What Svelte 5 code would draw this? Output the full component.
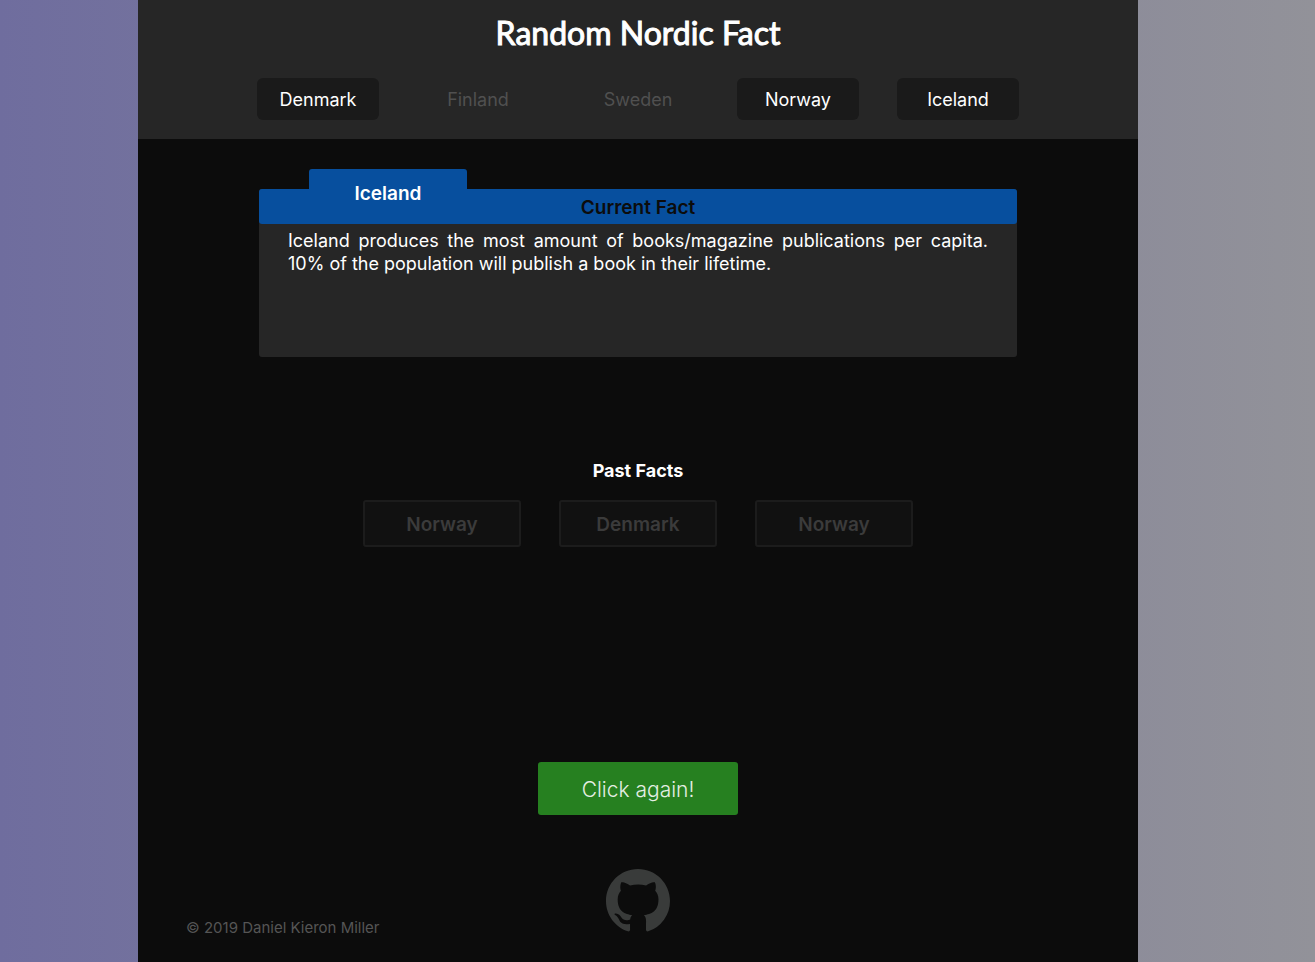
<script>
  let countries = $state([
    { name: 'Denmark', on: true },
    { name: 'Finland', on: false },
    { name: 'Sweden', on: false },
    { name: 'Norway', on: true },
    { name: 'Iceland', on: true }
  ]);
  const pastFacts = ['Norway', 'Denmark', 'Norway'];
</script>

<div class="backdrop">
  <div class="page">
    <header>
      <h1>Random Nordic Fact</h1>
      <div class="countries">
        {#each countries as country}
          <button
            type="button"
            class="country"
            class:on={country.on}
            aria-pressed={country.on}
            onclick={() => (country.on = !country.on)}>{country.name}</button>
        {/each}
      </div>
    </header>

    <main>
      <section class="fact">
        <div class="tab">Iceland</div>
        <h2 class="fact-title">Current Fact</h2>
        <p>
          Iceland produces the most amount of books/magazine publications per capita. 10% of the
          population will publish a book in their lifetime.
        </p>
      </section>

      <section class="past">
        <h2>Past Facts</h2>
        <div class="past-list">
          {#each pastFacts as fact}
            <button type="button" class="past-fact">{fact}</button>
          {/each}
        </div>
      </section>

      <button type="button" class="again">Click again!</button>
    </main>

    <footer>
      <small>© 2019 Daniel Kieron Miller</small>
      <a href="#github" aria-label="GitHub">
        <svg viewBox="0 0 16 16" width="64" height="64" aria-hidden="true">
          <path
            fill="currentColor"
            d="M8 0C3.58 0 0 3.58 0 8c0 3.54 2.29 6.53 5.47 7.59.4.07.55-.17.55-.38 0-.19-.01-.82-.01-1.49-2.01.37-2.53-.49-2.69-.94-.09-.23-.48-.94-.82-1.13-.28-.15-.68-.52-.01-.53.63-.01 1.08.58 1.23.82.72 1.21 1.87.87 2.33.66.07-.52.28-.87.51-1.07-1.78-.2-3.64-.89-3.64-3.95 0-.87.31-1.59.82-2.15-.08-.2-.36-1.02.08-2.12 0 0 .67-.21 2.2.82.64-.18 1.32-.27 2-.27s1.36.09 2 .27c1.53-1.04 2.2-.82 2.2-.82.44 1.1.16 1.92.08 2.12.51.56.82 1.27.82 2.15 0 3.07-1.87 3.75-3.65 3.95.29.25.54.73.54 1.48 0 1.07-.01 1.93-.01 2.2 0 .21.15.46.55.38A8.01 8.01 0 0 0 16 8c0-4.42-3.58-8-8-8z"
          />
        </svg>
      </a>
    </footer>
  </div>
</div>

<style>
  :global(body) {
    margin: 0;
  }

  .backdrop {
    box-sizing: border-box;
    min-height: 100vh;
    display: flex;
    justify-content: center;
    padding-right: 39px;
    background: linear-gradient(to right, #6f6d9e, #929299);
    font-family: Inter, 'Liberation Sans', sans-serif;
    font-size: 18px;
    color: #fff;
  }

  .page {
    flex: 0 1 1000px;
    min-width: 0;
    display: flex;
    flex-direction: column;
    background: #0c0c0c;
  }

  button {
    font: inherit;
    cursor: pointer;
  }

  h1,
  h2,
  p {
    margin: 0;
  }

  header {
    padding: 12px 16px 19px;
    background: #262626;
    text-align: center;
  }

  h1 {
    font: 400 32px/42px Lato, sans-serif;
    -webkit-text-stroke: 1px currentColor;
  }

  .countries {
    display: flex;
    flex-wrap: wrap;
    justify-content: center;
    gap: 38px;
    margin-top: 24px;
  }

  .country {
    width: 122px;
    height: 42px;
    padding: 0;
    border: 0;
    border-radius: 6px;
    background: transparent;
    color: #505050;
  }

  .country.on {
    background: #1a1a1a;
    color: #fff;
  }

  main {
    flex: 1;
    display: flex;
    flex-direction: column;
    align-items: center;
    padding: 50px 16px 0;
  }

  .fact {
    position: relative;
    box-sizing: border-box;
    width: 100%;
    max-width: 758px;
    min-height: 168px;
    border-radius: 3px;
    background: #262626;
  }

  .tab {
    position: absolute;
    top: -20px;
    left: 50px;
    width: 158px;
    border-radius: 3px 3px 0 0;
    background: #074f9e;
    font-size: 19px;
    font-weight: 600;
    line-height: 50px;
    text-align: center;
  }

  h2 {
    font-size: 18px;
    font-weight: 700;
    line-height: 24px;
    text-align: center;
  }

  .fact-title {
    padding: 7px 0 4px;
    border-radius: 3px;
    background: #074f9e;
    color: #0c0c0c;
    font-size: 19px;
    font-weight: 600;
  }

  .fact p {
    padding: 5px 29px;
    line-height: 23px;
    text-align: justify;
  }

  .past {
    margin-top: 102px;
  }

  .past-list {
    display: flex;
    flex-wrap: wrap;
    justify-content: center;
    gap: 38px;
    margin-top: 17px;
  }

  .past-fact {
    width: 158px;
    height: 47px;
    padding: 2px 0 0;
    border: 2px solid #1c1c1c;
    border-radius: 3px;
    background: #111;
    color: #3b3b3b;
    font-size: 19px;
    font-weight: 600;
  }

  .again {
    width: 200px;
    height: 53px;
    margin-top: auto;
    padding: 2px 0 0;
    border: 0;
    border-radius: 3px;
    background: #268020;
    color: #e4eee3;
    font-size: 21px;
    font-weight: 300;
  }

  footer {
    display: grid;
    grid-template-columns: 1fr auto 1fr;
    align-items: end;
    padding: 54px 48px 29px;
  }

  small {
    font-size: 15px;
    line-height: 11px;
    color: #555;
  }

  a {
    display: block;
    color: #393b3a;
  }

  svg {
    display: block;
  }
</style>
